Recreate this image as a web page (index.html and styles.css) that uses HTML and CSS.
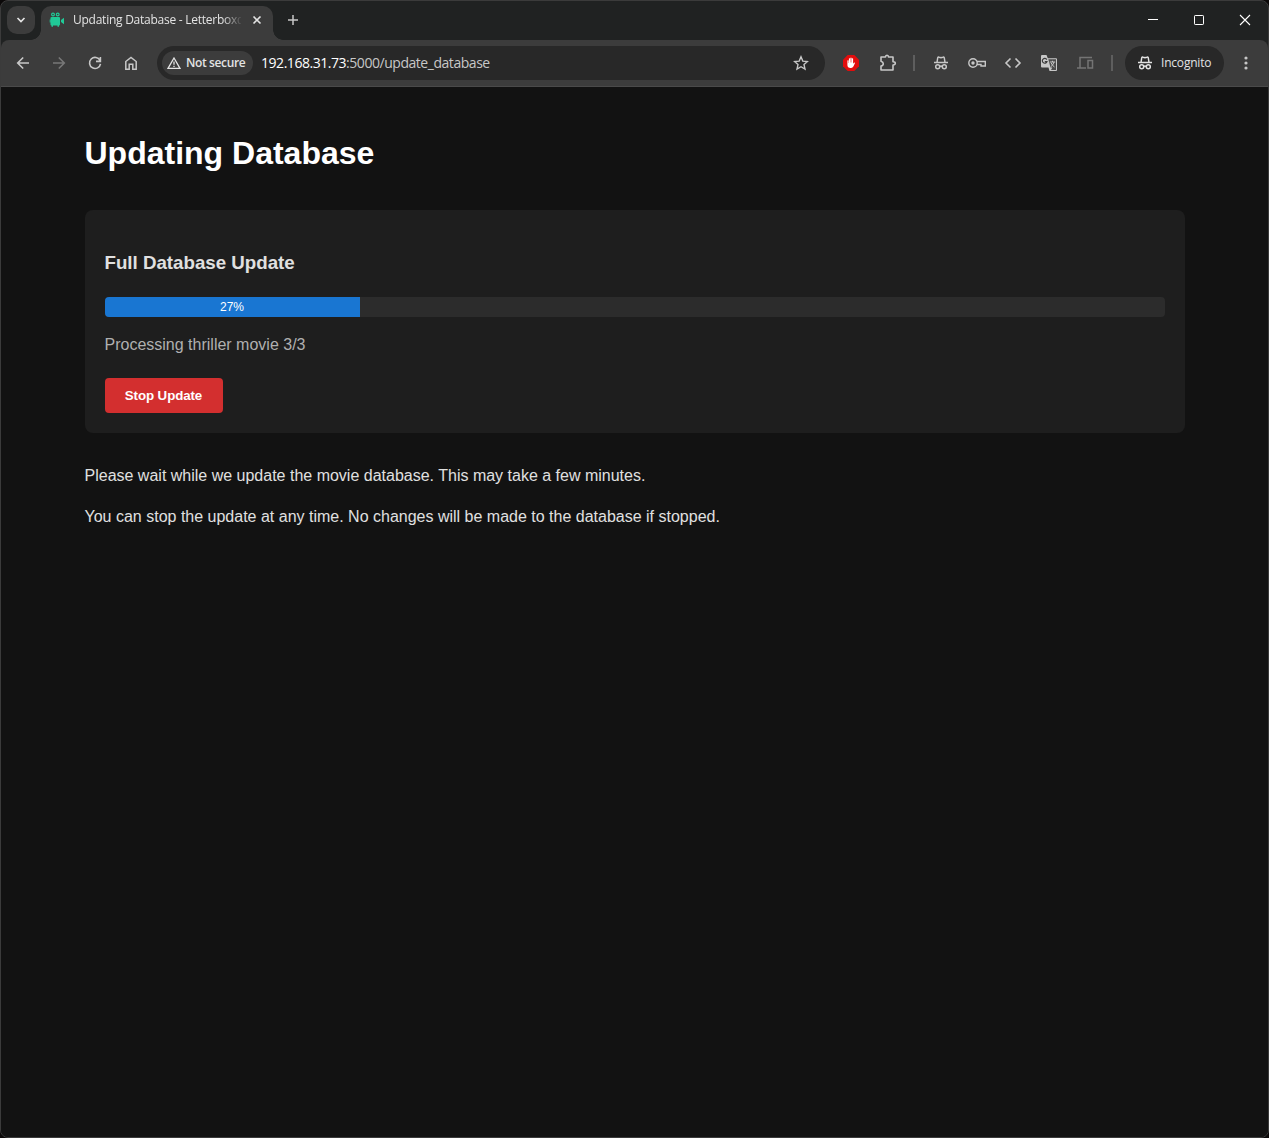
FILE: index.html
```html
<!DOCTYPE html>
<html lang="en">
<head>
<meta charset="utf-8">
<title>Updating Database - Letterboxd</title>
<link rel="stylesheet" href="styles.css">
</head>
<body>
<svg class="defs" width="0" height="0" aria-hidden="true">
  <symbol id="incognito" viewBox="0 0 16 16">
    <path d="M1 7.5h14M4 7.3 4.700 3q.2-1.200 1.400-.8L8 2.700l1.900-.5q1.200-.4 1.400.8L12 7.300M6.700 11.500q1.300-.8 2.600 0" fill="none" stroke="currentColor" stroke-width="1.500"/>
    <circle cx="4.700" cy="11.800" r="2" fill="none" stroke="currentColor" stroke-width="1.500"/>
    <circle cx="11.300" cy="11.800" r="2" fill="none" stroke="currentColor" stroke-width="1.500"/>
  </symbol>
</svg>
<div class="window">
  <header class="titlebar">
    <button class="tab-search" aria-label="Search tabs"><svg width="10" height="6" viewBox="0 0 10 6"><path d="M1.500 1 5 4.500 8.500 1" fill="none" stroke="#e3e3e3" stroke-width="1.700"/></svg></button>
    <div class="tab">
      <svg class="favicon" width="16" height="16" viewBox="0 0 16 16"><g fill="#20c997"><rect x="1.500" y="5" width="9.500" height="8.500" rx="1"/><path d="M12 8 15 5.800v6.400L12 10zM2.500 13h1.500v1.700H2.500zM8.500 13H10v1.700H8.500zM.7 7.500h1v3h-1z"/></g><g fill="none" stroke="#20c997" stroke-width="1.200"><circle cx="4" cy="2.500" r="1.400"/><circle cx="8.700" cy="2.500" r="1.400"/></g></svg>
      <span class="tab-title">Updating Database - Letterboxd</span>
      <svg class="tab-close" width="10" height="10" viewBox="0 0 10 10"><path d="m1.500 1.500 7 7m0-7-7 7" stroke="#e3e3e3" stroke-width="1.600"/></svg>
    </div>
    <svg class="new-tab" width="12" height="12" viewBox="0 0 12 12"><path d="M6 1v10M1 6h10" stroke="#c7c7c7" stroke-width="1.500"/></svg>
    <div class="window-controls">
      <svg width="46" height="38" viewBox="0 0 46 38"><path d="M18 18.500h10" stroke="#fff"/></svg>
      <svg width="46" height="38" viewBox="0 0 46 38"><rect x="18.500" y="14.500" width="9" height="9" rx=".7" fill="none" stroke="#fff"/></svg>
      <svg width="46" height="38" viewBox="0 0 46 38"><path d="m18 14 10 10m0-10L18 24" stroke="#fff" stroke-width="1.100"/></svg>
    </div>
  </header>
  <nav class="toolbar">
    <div class="nav-buttons">
      <svg width="16" height="16" viewBox="0 0 16 16"><path d="M14 8H3m5.200-5.500L2.700 8l5.500 5.500" fill="none" stroke="#c7c7c7" stroke-width="1.600"/></svg>
      <svg width="16" height="16" viewBox="0 0 16 16"><path d="M2 8h11M7.800 2.500 13.300 8l-5.500 5.500" fill="none" stroke="#777" stroke-width="1.600"/></svg>
      <svg width="16" height="16" viewBox="0 0 16 16"><path d="M13 5.500A5.500 5.500 0 1 0 13.500 8.800M13.400 2v4.400H9" fill="none" stroke="#c7c7c7" stroke-width="1.600"/></svg>
      <svg width="16" height="16" viewBox="0 0 16 16"><path d="M2.800 14.200V6.500L8 2.400l5.200 4.100v7.700H9.800V9.300H6.200v4.900z" fill="none" stroke="#c7c7c7" stroke-width="1.500"/></svg>
    </div>
    <div class="omnibox">
      <div class="security-chip">
        <svg width="14" height="14" viewBox="0 0 14 14"><path d="M7 2 13 12.300H1zM7 5.500v3.300M7 9.700v1.400" fill="none" stroke="#e3e3e3" stroke-width="1.300"/></svg>
        <span>Not secure</span>
      </div>
      <span class="url"><span class="url-host">192.168.31.73</span>:5000/update_database</span>
      <svg class="star" width="16" height="16" viewBox="0 0 16 16"><path d="m8 1.800 1.800 4.300 4.700.4-3.500 3.100 1 4.500L8 11.700l-4 2.400 1-4.500L1.500 6.500l4.700-.4z" fill="none" stroke="#c7c7c7" stroke-width="1.400"/></svg>
    </div>
    <div class="extensions">
      <svg class="blocker" width="16" height="16" viewBox="0 0 16 16"><path d="M4.700 0h6.600L16 4.700v6.600L11.300 16H4.700L0 11.300V4.700z" fill="#e20d0d"/><path d="M4.400 5.500q.6-.5 1.200 0V8h.3V3.500q.6-.7 1.200 0v4h.3V2.900q.6-.7 1.200 0v4.600h.3v-4q.6-.7 1.200 0v5.300l1-1.300q.8-.2.9.4l-1.600 3.700Q9.500 13.300 7.600 13q-3.200 0-3.200-3z" fill="#fff"/></svg>
      <svg width="18" height="18" viewBox="0 0 18 18"><path d="M2 3h4.500q0-1.700 1.500-1.700T9.500 3H14v4.700q2.300 0 2.300 1.600T14 11v5H2v-4q2.300-.5 2.300-2.300T2 7.300z" fill="none" stroke="#c7c7c7" stroke-width="1.600" stroke-linejoin="round"/></svg>
      <i class="divider divider-start"></i>
      <svg class="muted" width="18" height="16"><use href="#incognito"/></svg>
      <svg width="18" height="16" viewBox="0 0 18 16"><circle cx="5" cy="8" r="4.200" fill="none" stroke="#c7c7c7" stroke-width="1.400"/><circle cx="5" cy="8" r="1.700" fill="#c7c7c7"/><path d="M9 6.500h8.300V11H13V9.500H9" fill="none" stroke="#c7c7c7" stroke-width="1.400"/></svg>
      <svg width="18" height="16" viewBox="0 0 18 16"><path d="M6.500 3.500 2 8l4.500 4.500m5-9L16 8l-4.500 4.500" fill="none" stroke="#c7c7c7" stroke-width="1.600"/></svg>
      <svg width="18" height="18" viewBox="0 0 18 18"><path d="M2 1h4.500l1.300 3.300H16q1 0 1 1V16q0 1-1 1H9.500l-1-3.500H2q-1 0-1-1V2q0-1 1-1z" fill="#c7c7c7"/><path d="M8.300 5.300H16V16h-5l1.300-2.500H10.500z" fill="#4c4c4c"/><path d="M6.800 5.600a2.400 2.400 0 1 0 .2 2H4.800" fill="none" stroke="#3c3c3c" stroke-width="1.200"/><path d="M9.800 8h5.400M12.500 6.800V8m1.500 0q-.6 3-3.200 4.700M11.200 9q1 2.500 3.300 4" fill="none" stroke="#c7c7c7" stroke-width="1"/></svg>
      <svg width="18" height="16" viewBox="0 0 18 16"><path d="M16 2.500H4v10M1 13h9M12 5.500h4.500V13H12z" fill="none" stroke="#747474" stroke-width="1.500"/></svg>
      <i class="divider divider-end"></i>
    </div>
    <div class="incognito-chip"><svg width="16" height="16"><use href="#incognito"/></svg><span>Incognito</span></div>
    <svg class="menu" width="4" height="16" viewBox="0 0 4 16"><g fill="#c7c7c7"><circle cx="2" cy="3" r="1.600"/><circle cx="2" cy="8" r="1.600"/><circle cx="2" cy="13" r="1.600"/></g></svg>
  </nav>
  <main class="page">
    <div class="container">
      <h1>Updating Database</h1>
      <section class="card">
        <h3>Full Database Update</h3>
        <div class="progress"><div class="progress-fill" style="width: 24.06%">27%</div></div>
        <div class="status">Processing thriller movie 3/3</div>
        <button class="stop">Stop Update</button>
      </section>
      <p>Please wait while we update the movie database. This may take a few minutes.</p>
      <p>You can stop the update at any time. No changes will be made to the database if stopped.</p>
    </div>
  </main>
</div>
</body>
</html>
```
FILE: styles.css
```css
* { box-sizing: border-box; }
body { margin: 0; background: #0b0909; font-family: "Liberation Sans", Arial, sans-serif; }
svg { display: block; flex: none; }
.defs { position: absolute; }
button { border: 0; padding: 0; }

.window {
  display: flex; flex-direction: column; height: 1138px;
  border: 1px solid #3b3b3b; border-radius: 8px; overflow: hidden;
  background: linear-gradient(#202222 60px, #121212 60px);
}

.titlebar {
  display: flex; align-items: center; height: 39px; flex: none; padding: 0 0 1px 6px;
  font-family: "Open Sans", "Noto Sans", sans-serif;
}
.tab-search {
  display: flex; align-items: center; justify-content: center;
  width: 28px; height: 28px; border-radius: 10px; background: #3c3c3c;
}
.tab {
  position: relative; align-self: flex-end; display: flex; align-items: center;
  width: 232px; height: 34px; margin: 0 0 -1px 6px; padding: 0 11px 6px 8px;
  border-radius: 10px 10px 0 0; background: #3c3c3c; color: #e3e3e3;
}
.tab::before, .tab::after {
  content: ""; position: absolute; bottom: 0; width: 10px; height: 10px;
}
.tab::before { left: -10px; background: radial-gradient(circle at 0 0, transparent 9.5px, #3c3c3c 10px); }
.tab::after { right: -10px; background: radial-gradient(circle at 100% 0, transparent 9.5px, #3c3c3c 10px); }
.tab-title {
  width: 168px; margin-left: 8px; overflow: hidden; white-space: nowrap;
  font-size: 12px; line-height: 18px; letter-spacing: -.25px;
  -webkit-mask-image: linear-gradient(90deg, #000 150px, transparent 170px);
  mask-image: linear-gradient(90deg, #000 150px, transparent 170px);
}
.tab-close { margin-left: 11px; }
.new-tab { margin-left: 14px; }
.window-controls { display: flex; margin-left: auto; }

.toolbar {
  display: flex; align-items: center; height: 47px; flex: none;
  padding-bottom: 1px; background: #3c3c3c; border-bottom: 1px solid #4a4a4a;
  border-radius: 8px 8px 0 0;
  font-family: "Open Sans", "Noto Sans", sans-serif;
}
.nav-buttons { display: flex; gap: 20px; margin-left: 14px; }
.omnibox {
  display: flex; align-items: center; width: 668px; height: 34px; margin-left: 18px;
  padding: 0 16px 0 5px; border-radius: 17px; background: #282828;
}
.security-chip {
  display: flex; align-items: center; gap: 5px; width: 91px; height: 24px; padding-left: 5px;
  border-radius: 12px; background: #3c3c3c; color: #e3e3e3;
  font-size: 12px; font-weight: 600; letter-spacing: -.37px; white-space: nowrap;
}
.url { margin-left: 8px; color: #c7c7c7; font-size: 14px; letter-spacing: -.46px; white-space: nowrap; }
.url-host { color: #fff; }
.star { margin-left: auto; }
.extensions { display: flex; align-items: center; gap: 18px; margin-left: 18px; }
.blocker { margin-right: 2px; }
.divider { width: 2px; height: 16px; background: #5e5e5e; }
.divider-start { margin: 0 -1px 0 -2px; }
.divider-end { margin: 0 -1px; }
.muted { color: #c7c7c7; }
.incognito-chip {
  display: flex; align-items: center; gap: 8px; width: 99px; height: 34px; margin-left: 13px; padding-left: 12px;
  border-radius: 17px; background: #282828; color: #e3e3e3; font-size: 12px; letter-spacing: -.2px;
}
.menu { margin-left: 20px; }

.page { flex: 1; padding: 20px; background: #121212; color: #e0e0e0; font-size: 16px; line-height: 1.6; }
.container { width: 1100px; margin: 0 auto; }
h1 { margin: 21.44px 0 30px; color: #fff; font-size: 32px; }
.card { display: flow-root; margin-bottom: 30px; padding: 20px; border-radius: 8px; background: #1e1e1e; }
h3 { margin: 18px 0 19.44px; font-size: 18.72px; }
.progress { height: 20px; overflow: hidden; border-radius: 4px; background: #2c2c2c; }
.progress-fill { height: 100%; background: #1976d2; color: #fff; font-size: 12px; line-height: 20px; text-align: center; }
.status { margin: 15px 0 20px; color: #b0b0b0; }
.stop {
  display: block; width: 118px; height: 35px; border-radius: 4px;
  background: #d32f2f; color: #fff; font: bold 13.333px "Liberation Sans", Arial, sans-serif; letter-spacing: -.1px;
}
p { margin: 0 0 16px; }
```
